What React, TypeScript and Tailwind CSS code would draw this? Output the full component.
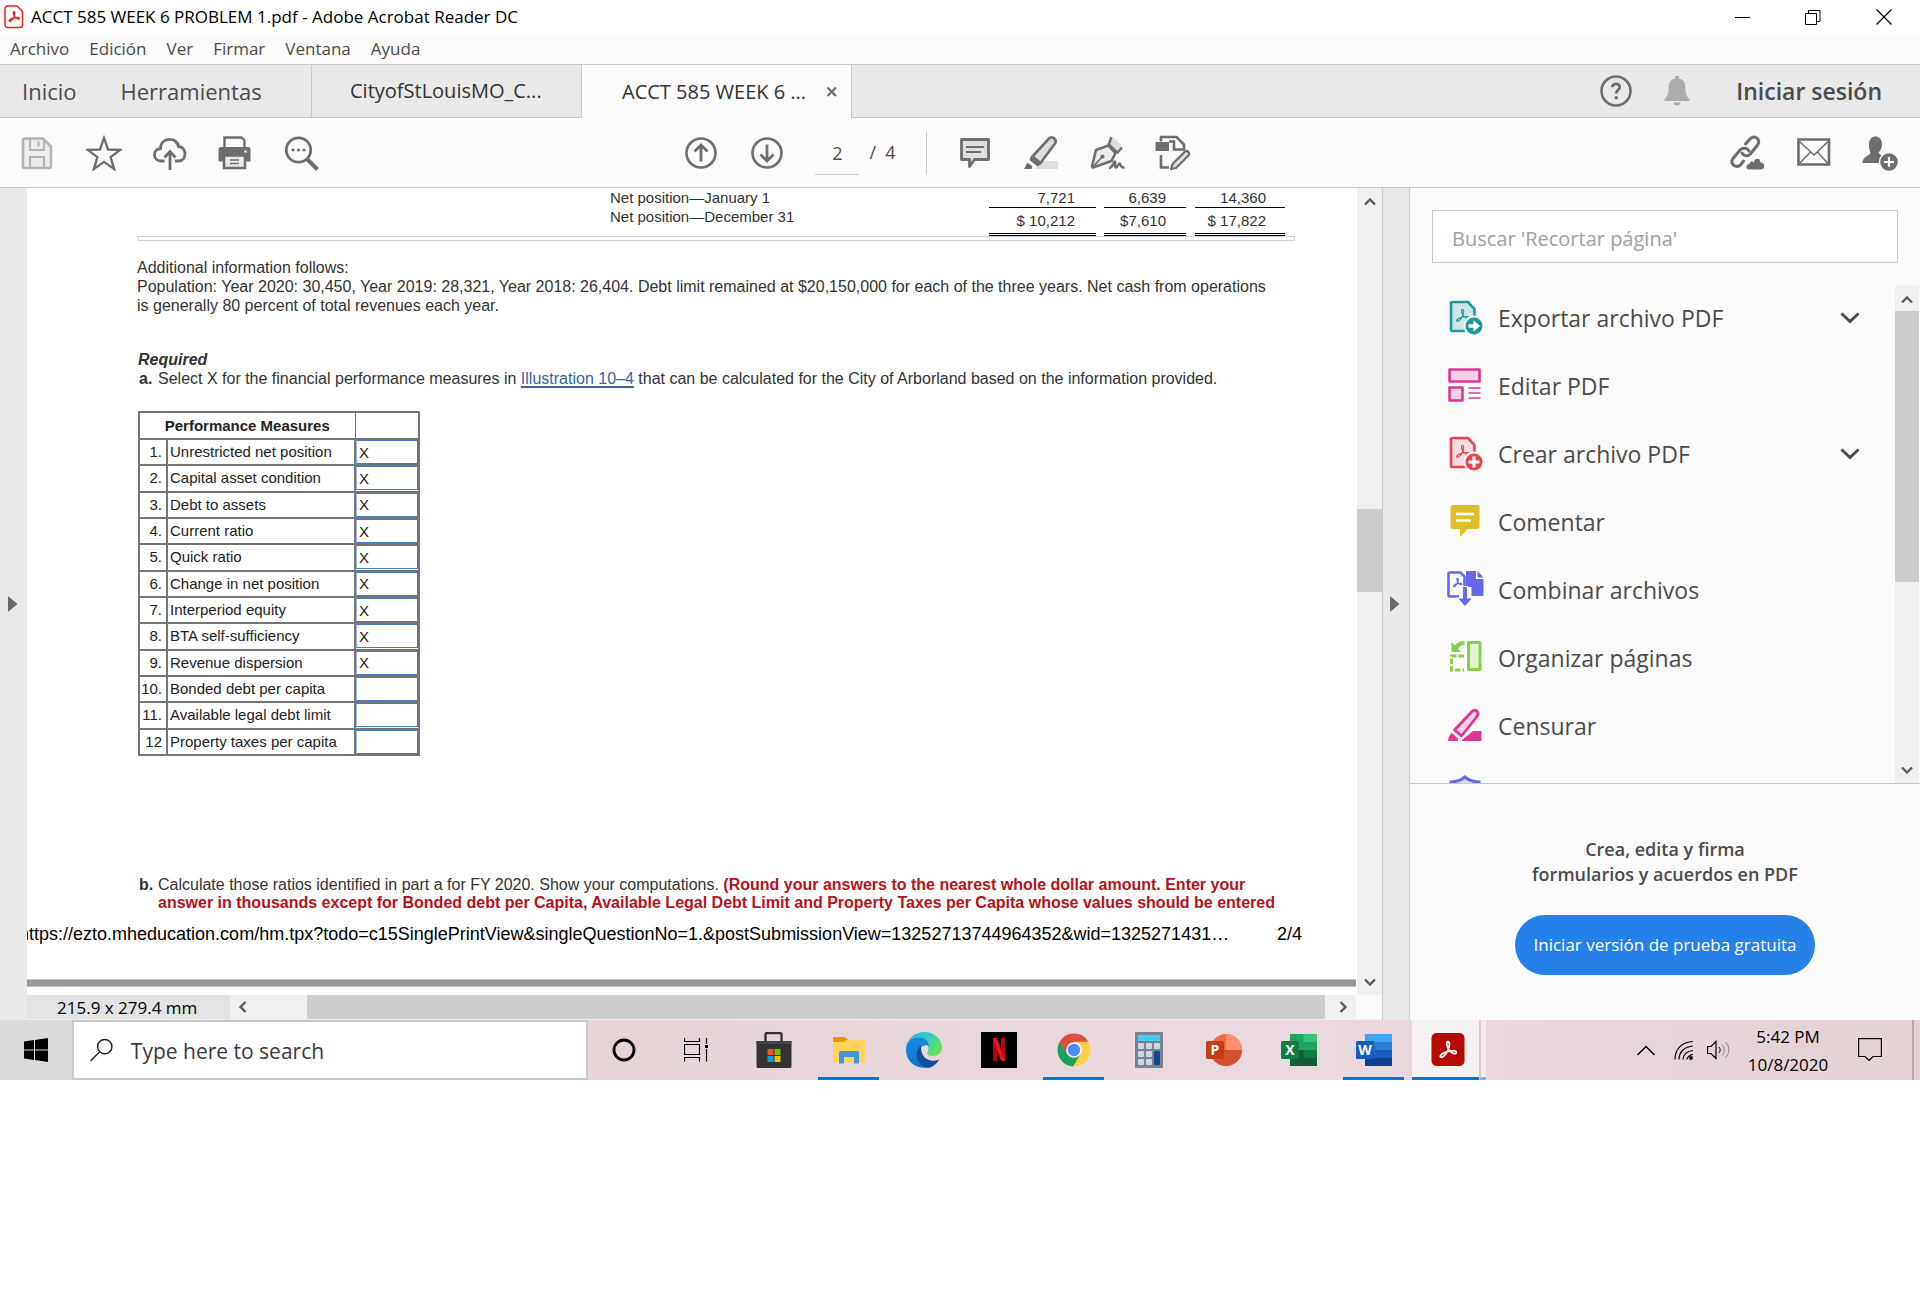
import React from "react";

type IconProps = { className?: string };

const ui = "font-['Open_Sans',sans-serif]";

function Trefoil({ x, y, size, width, color }: { x: number; y: number; size: number; width: number; color: string }) {
  return (
    <svg x={x} y={y} width={size} height={size} viewBox="0 0 24 24">
      <path
        d="M3.5 20.5c-1.6-1.8 3-5 8.500-6.200s9.500-1 9.500 1.200-3.800 1.800-7.200-1.800-5-10-2.600-10.700 2.600 5.200.3 9.700-6.300 9.800-8.500 7.800z"
        fill="none"
        stroke={color}
        strokeWidth={width}
        strokeLinejoin="round"
      />
    </svg>
  );
}

/* ---------- Title bar ---------- */

function PdfFileIcon() {
  return (
    <svg className="h-6 w-5" viewBox="0 0 20 24">
      <path d="M3.500 1h9.500l5.500 5.500v13.500a2.500 2.500 0 0 1-2.500 2.500h-12.500a2.500 2.500 0 0 1-2.500-2.500v-16.500a2.500 2.500 0 0 1 2.500-2.500z" fill="#fff" stroke="#e8251b" strokeWidth="1.500" />
      <Trefoil x={3.5} y={5} size={13} width={2.6} color="#e8251b" />
    </svg>
  );
}

function TitleBar() {
  return (
    <header className="flex h-[34px] items-center bg-white pl-1">
      <PdfFileIcon />
      <h1 className="pl-[7px] text-[17px] leading-6 text-black">ACCT 585 WEEK 6 PROBLEM 1.pdf - Adobe Acrobat Reader DC</h1>
      <div className="ml-auto flex">
        <button aria-label="Minimizar" className="flex h-[34px] w-[70px] items-center justify-center">
          <svg className="size-4" viewBox="0 0 16 16"><path d="M0 8.500h15" stroke="#000" /></svg>
        </button>
        <button aria-label="Restaurar" className="flex h-[34px] w-[70px] items-center justify-center">
          <svg className="size-4" viewBox="0 0 16 16"><path d="M.5 4.500h11v11h-11zM3.500 4.500v-3h11.500v11h-3.500" fill="none" stroke="#000" /></svg>
        </button>
        <button aria-label="Cerrar" className="flex h-[34px] w-[72px] items-center justify-center">
          <svg className="size-4" viewBox="0 0 16 16"><path d="M.5 .5l15 15M15.500 .5l-15 15" stroke="#000" strokeWidth="1.200" /></svg>
        </button>
      </div>
    </header>
  );
}

function MenuBar() {
  return (
    <nav className="flex h-[31px] items-center gap-5 border-b border-[#c8c8c8] bg-[#fbfbfb] pl-[10px] text-[17px] leading-6 text-[#4b4b4b]">
      {["Archivo", "Edición", "Ver", "Firmar", "Ventana", "Ayuda"].map((m) => (
        <button key={m}>{m}</button>
      ))}
    </nav>
  );
}

/* ---------- Tabs ---------- */

function TabStrip() {
  return (
    <div className="flex h-[53px] bg-[#e9e9e9] text-[#4b4b4b]">
      <div className="flex w-[312px] items-center gap-11 border-r border-b border-[#c8c8c8] pl-[22px] text-[22px]">
        <button>Inicio</button>
        <button>Herramientas</button>
      </div>
      <button className="w-[270px] border-r border-b border-[#c8c8c8] pl-[38px] text-left text-[20px] text-[#333]">CityofStLouisMO_C...</button>
      <div className="flex w-[270px] items-center border-r border-[#c8c8c8] bg-[#fbfbfb] pl-[40px] text-[20px] text-[#333]">
        <button className="w-[204px] text-left">ACCT 585 WEEK 6 ...</button>
        <button aria-label="Cerrar pestaña">
          <svg className="size-3" viewBox="0 0 12 12"><path d="M1.500 1.500l8.500 8.500M10 1.500l-8.500 8.500" stroke="#6e6e6e" strokeWidth="2.200" /></svg>
        </button>
      </div>
      <div className="flex flex-1 items-center justify-end gap-[31px] border-b border-[#c8c8c8] pr-[38px]">
        <button aria-label="Ayuda">
          <svg className="size-8" viewBox="0 0 32 32">
            <circle cx="16" cy="16" r="14.500" fill="none" stroke="#6e6e6e" strokeWidth="2.600" />
            <path d="M12.300 12.200c.4-4.400 7.800-4.300 7.400.2-.3 2.600-3.500 3-3.500 6.100" fill="none" stroke="#6e6e6e" strokeWidth="2.800" />
            <circle cx="16.200" cy="22.700" r="1.800" fill="#6e6e6e" />
          </svg>
        </button>
        <button aria-label="Notificaciones">
          <svg className="h-[30px] w-7" viewBox="0 0 28 30">
            <path d="M12 0h4v2.500c4.300.9 6.300 4 6.300 8.500 0 6 .8 9 4.200 12v2H1.500v-2c3.400-3 4.200-6 4.200-12 0-4.500 2-7.600 6.300-8.500zM10.500 26.500h7c-.5 4-6.500 4-7 0z" fill="#adadad" />
          </svg>
        </button>
        <button className="pl-[14px] text-[23px] font-semibold">Iniciar sesión</button>
      </div>
    </div>
  );
}

/* ---------- Toolbar ---------- */

const g = "#6e6e6e";

function SaveIcon({ className }: IconProps) {
  return (
    <svg className={className} viewBox="0 0 36 36">
      <path d="M4.500 3.500h18.500l8 8v20a1.500 1.500 0 0 1-1.500 1.500h-25a1.500 1.500 0 0 1-1.500-1.500v-26.500a1.500 1.500 0 0 1 1.500-1.500z" fill="#ececec" stroke="#b4b4b4" strokeWidth="2.600" />
      <path d="M10 4v11h14v-11M10 32v-10h14v10M18.500 6.500v5" fill="none" stroke="#b4b4b4" strokeWidth="2.200" />
    </svg>
  );
}
function StarIcon({ className }: IconProps) {
  return (
    <svg className={className} viewBox="0 0 36 36">
      <path d="M18 3l4.100 11.500 12.200.3-9.700 7.400 3.500 11.700-10.100-7-10.100 7 3.500-11.700-9.700-7.400 12.200-.3z" fill="none" stroke={g} strokeWidth="2.300" />
    </svg>
  );
}
function CloudUpIcon({ className }: IconProps) {
  return (
    <svg className={className} viewBox="0 0 36 36">
      <path d="M12.500 26h-4c-8-.5-8-12 0-12.500 0-11.500 16.500-12 18-2 8.500.5 8.500 14 .5 14.500h-4" fill="none" stroke={g} strokeWidth="2.800" />
      <path d="M18 35v-18M12.500 22.500l5.500-6 5.500 6" fill="none" stroke={g} strokeWidth="2.800" />
    </svg>
  );
}
function PrinterIcon({ className }: IconProps) {
  return (
    <svg className={className} viewBox="0 0 36 36">
      <path d="M6.500 12v-9.500h17l3 3v6.500" fill="#fbfbfb" stroke={g} strokeWidth="2.400" />
      <path d="M3 12h27a2.500 2.500 0 0 1 2.500 2.500v12h-5v-5h-22v5h-5v-12a2.500 2.500 0 0 1 2.500-2.500z" fill={g} />
      <path d="M6 20.500h21v12.500h-21z" fill="#ececec" stroke={g} strokeWidth="2.600" />
      <path d="M12 25h9M12 28.500h9" stroke={g} strokeWidth="1.500" />
      <circle cx="27.500" cy="16.500" r="1.300" fill="#fbfbfb" />
    </svg>
  );
}
function FindIcon({ className }: IconProps) {
  return (
    <svg className={className} viewBox="0 0 36 36">
      <circle cx="14.500" cy="15" r="12.200" fill="none" stroke={g} strokeWidth="2.800" />
      <path d="M23 24l10.500 10.500" stroke={g} strokeWidth="4" />
      <g fill={g}><circle cx="9" cy="15" r="1.600" /><circle cx="14.500" cy="15" r="1.600" /><circle cx="20" cy="15" r="1.600" /></g>
    </svg>
  );
}
function ArrowCircle({ className, down }: IconProps & { down?: boolean }) {
  return (
    <svg className={className} viewBox="0 0 36 36">
      <circle cx="18" cy="18" r="14.500" fill="none" stroke={g} strokeWidth="2.600" />
      {down
        ? <path d="M18 9.500v16M11.500 19.500l6.500 6.500 6.500-6.500" fill="none" stroke={g} strokeWidth="2.800" />
        : <path d="M18 26.500v-16M11.500 16.500l6.500-6.500 6.500 6.500" fill="none" stroke={g} strokeWidth="2.800" />}
    </svg>
  );
}
function NoteIcon({ className }: IconProps) {
  return (
    <svg className={className} viewBox="0 0 36 36">
      <path d="M4.500 4.500h27v20h-14l-5 7v-7h-8z" fill="#dedede" stroke={g} strokeWidth="2.800" strokeLinejoin="round" />
      <path d="M9 12h18M9 17h15" stroke={g} strokeWidth="1.800" />
    </svg>
  );
}
function HighlighterIcon({ className }: IconProps) {
  return (
    <svg className={className} viewBox="0 0 36 36">
      <path d="M11 34l9-8h15v8z" fill="#dedede" />
      <path d="M9.500 21.500l16.500-18c3-3 8.500 1 6 5l-14.500 19.500z" fill="#dedede" stroke={g} strokeWidth="2.600" strokeLinejoin="round" />
      <path d="M8 20.500l10.500 8.500-4 2.500-8-6.500zM4.500 27.500l5 4-1 2.500h-7.500z" fill={g} />
    </svg>
  );
}
function PenIcon({ className }: IconProps) {
  return (
    <svg className={className} viewBox="0 0 36 36">
      <path d="M20 9l4-7 9 9-5 6z" fill="#dedede" />
      <path d="M22.500 2l-3 8M20 9.500l8.500 8 4.500-5" fill="none" stroke={g} strokeWidth="2.400" />
      <path d="M19.500 10.500l7 7.500-4 8-18.500 6.500-1-1 4-16.500z" fill="#ececec" stroke={g} strokeWidth="2.600" strokeLinejoin="round" />
      <path d="M3.500 32.500l9-10" stroke={g} strokeWidth="1.800" />
      <circle cx="13.500" cy="21.500" r="2" fill={g} />
      <path d="M20 33c4 0 4-6.500 6-6.500 1 0-1 6 1 6s2-4 3.500-4 0 4.500 5 4" fill="none" stroke={g} strokeWidth="2.400" />
    </svg>
  );
}
function ConvertIcon({ className }: IconProps) {
  return (
    <svg className={className} viewBox="0 0 36 36">
      <path d="M6 6.500v-4.500h15.500l7.500 7.500v5h-10v-8h-5" fill="none" stroke={g} strokeWidth="2.600" />
      <path d="M.5 7h13.500v9h-13.500z" fill={g} />
      <path d="M6 20v12.500h8" fill="none" stroke={g} strokeWidth="2.600" />
      <path d="M17.500 29l12.500-12.500c2-1.500 5.500 1 3.500 4l-12.500 12.500-5 1z" fill="#dedede" stroke={g} strokeWidth="2.200" strokeLinejoin="round" />
    </svg>
  );
}
function LinkCloudIcon({ className }: IconProps) {
  return (
    <svg className={className} viewBox="0 0 36 36">
      <g fill="none" stroke={g} strokeWidth="3" strokeLinecap="round">
        <path d="M15.500 9l5-5.500c5-4 10.500 1.500 7 6.500l-7 9c-3 3-7 2-8.500-1" />
        <path d="M13.500 26l-3 4c-5 4-11-1.500-7.500-6.500l7-8.500c3.500-3 7.500-2 9 1" />
      </g>
      <path d="M18.500 35c-4-.5-3.500-6 .5-6.500.5-3 3.500-3.500 4.500-2 1-5 7.500-4 7.500.5 5 .5 5 7.500.5 8z" fill={g} stroke="#fbfbfb" strokeWidth="1.200" />
    </svg>
  );
}
function EnvelopeIcon({ className }: IconProps) {
  return (
    <svg className={className} viewBox="0 0 36 36">
      <path d="M2.500 4.500h30.500v25h-30.500z" fill="none" stroke={g} strokeWidth="2.600" />
      <path d="M3.500 6.500l14.500 13.500 14-13.500M3.500 28.500l11-11.500M32 28.500l-10.500-11.500" fill="none" stroke={g} strokeWidth="1.500" />
    </svg>
  );
}
function PersonAddIcon({ className }: IconProps) {
  return (
    <svg className={className} viewBox="0 0 36 36">
      <path d="M7 9c0-10 13-10 13 0 0 4-1.500 7-3.500 8.500 0 2.500 7 2.500 7 10.500h-23c0-7 7.500-7 8-10.500-1-1.500-1.500-4-1.500-8.500z" fill={g} />
      <circle cx="27" cy="27" r="9.500" fill={g} stroke="#fbfbfb" strokeWidth="1.500" />
      <path d="M27 22v10M22 27h10" stroke="#fff" strokeWidth="2.200" />
    </svg>
  );
}

function Toolbar() {
  const files: [string, React.ComponentType<IconProps>][] = [
    ["Guardar", SaveIcon], ["Favoritos", StarIcon], ["Subir", CloudUpIcon], ["Imprimir", PrinterIcon], ["Buscar", FindIcon],
  ];
  const edit: [string, React.ComponentType<IconProps>][] = [
    ["Agregar nota", NoteIcon], ["Resaltar", HighlighterIcon], ["Firmar", PenIcon], ["Convertir", ConvertIcon],
  ];
  const share: [string, React.ComponentType<IconProps>][] = [
    ["Compartir vínculo", LinkCloudIcon], ["Correo", EnvelopeIcon], ["Invitar", PersonAddIcon],
  ];
  return (
    <div className="flex h-[70px] items-center border-b border-[#c8c8c8] bg-[#fbfbfb] pr-[22px] pl-5 text-[18px] text-[#4b4b4b]">
      <div className="flex flex-1 gap-[30px]">
        {files.map(([n, I]) => <button key={n} aria-label={n}><I className="size-9" /></button>)}
      </div>
      <div className="mr-11 flex items-center">
        <button aria-label="Página anterior"><ArrowCircle className="size-9" /></button>
        <button aria-label="Página siguiente" className="ml-[30px]"><ArrowCircle className="size-9" down /></button>
        <input aria-label="Página" defaultValue="2" className="ml-[30px] h-11 w-11 border-b border-[#c8c8c8] bg-transparent pt-[2px] text-center outline-none" />
        <span className="pl-[10px]">/&nbsp; 4</span>
        <span className="ml-[30px] h-[42px] w-px bg-[#c8c8c8]" />
        <div className="ml-[30px] flex gap-[30px]">
          {edit.map(([n, I]) => <button key={n} aria-label={n}><I className="size-9" /></button>)}
        </div>
      </div>
      <div className="flex flex-1 justify-end gap-[30px]">
        {share.map(([n, I]) => <button key={n} aria-label={n}><I className="size-9" /></button>)}
      </div>
    </div>
  );
}

/* ---------- Document ---------- */

const measures: [string, string, string][] = [
  ["1.", "Unrestricted net position", "X"],
  ["2.", "Capital asset condition", "X"],
  ["3.", "Debt to assets", "X"],
  ["4.", "Current ratio", "X"],
  ["5.", "Quick ratio", "X"],
  ["6.", "Change in net position", "X"],
  ["7.", "Interperiod equity", "X"],
  ["8.", "BTA self-sufficiency", "X"],
  ["9.", "Revenue dispersion", "X"],
  ["10.", "Bonded debt per capita", ""],
  ["11.", "Available legal debt limit", ""],
  ["12", "Property taxes per capita", ""],
];

function NetPositionTable() {
  return (
    <table className="w-[1157px] table-fixed border-separate border-spacing-0 leading-[18px]">
      <colgroup>
        <col /><col className="w-[107px]" /><col className="w-2" /><col className="w-[82px]" /><col className="w-[9px]" /><col className="w-[90px]" /><col className="w-[10px]" />
      </colgroup>
      <tbody>
        <tr className="h-5">
          <td className="pl-[472px]">Net position—January 1</td>
          <td className="border-b border-black pr-[21px] text-right">7,721</td><td />
          <td className="border-b border-black pr-5 text-right">6,639</td><td />
          <td className="border-b border-black pr-[19px] text-right">14,360</td><td />
        </tr>
        <tr className="h-7">
          <td className="pl-[472px] align-top">Net position—December 31</td>
          <td className="border-b-3 border-double border-black pr-[21px] text-right">$ 10,212</td><td />
          <td className="border-b-3 border-double border-black pr-5 text-right">$7,610</td><td />
          <td className="border-b-3 border-double border-black pr-[19px] text-right">$ 17,822</td><td />
        </tr>
      </tbody>
    </table>
  );
}

function MeasuresTable() {
  return (
    <table className="mt-[23px] h-[345px] w-[282px] table-fixed border-collapse border-2 border-[#757575] leading-[18px] text-[#222]">
      <colgroup>
        <col className="w-[28px]" /><col className="w-[188px]" /><col />
      </colgroup>
      <thead>
        <tr className="h-[27px]">
          <th colSpan={2} className="border-2 border-r border-[#757575] p-0 font-bold">Performance Measures</th>
          <th className="border-2 border-l border-[#757575] p-0" aria-label="Selected" />
        </tr>
      </thead>
      <tbody>
        {measures.map(([n, label, x]) => (
          <tr key={n}>
            <td className="border-2 border-[#757575] p-0 pr-1 text-right">{n}</td>
            <td className="border-2 border-[#757575] p-0 pl-[2px]">{label}</td>
            <td className="border-2 border-[#757575] p-0">
              <input aria-label={label} defaultValue={x} className="block h-6 w-full border border-[#4a7abf] border-l-[#9db6dc] bg-white pl-[2px] outline-none" />
            </td>
          </tr>
        ))}
      </tbody>
    </table>
  );
}

function PdfPage() {
  return (
    <article className="flex-1 overflow-hidden bg-white font-['Liberation_Sans',Arial,sans-serif] text-[15px] whitespace-nowrap text-[#333]">
      <div className="pl-[111px]">
        <NetPositionTable />
        <div className="h-[5px] w-[1157px] border border-[#c9cfe0] bg-white" />
        <p className="mt-[17px] -ml-px text-[16px] leading-[19px]">
          Additional information follows:<br />
          Population: Year 2020: 30,450, Year 2019: 28,321, Year 2018: 26,404. Debt limit remained at $20,150,000 for each of the three years. Net cash from operations<br />
          is generally 80 percent of total revenues each year.
        </p>
        <h2 className="mt-9 text-[16px] leading-[18px] font-bold italic">Required</h2>
        <p className="flex text-[16px] leading-[19px]">
          <b className="w-5 pl-px">a.</b>
          <span>
            Select X for the financial performance measures in{" "}
            <a href="#illustration" className="text-[#3a62a0] underline decoration-2 underline-offset-2">Illustration 10–4</a>{" "}
            that can be calculated for the City of Arborland based on the information provided.
          </span>
        </p>
        <MeasuresTable />
        <p className="mt-[120px] flex text-[16px] leading-[18px]">
          <b className="w-5 pl-px">b.</b>
          <span>
            Calculate those ratios identified in part a for FY 2020. Show your computations.{" "}
            <b className="text-[#b5121b]">
              (Round your answers to the nearest whole dollar amount. Enter your<br />
              answer in thousands except for Bonded debt per Capita, Available Legal Debt Limit and Property Taxes per Capita whose values should be entered
            </b>
          </span>
        </p>
      </div>
      <div className="mt-3 -ml-2 flex text-[18px] leading-5 text-black">
        <span className="w-[1258px]">https://ezto.mheducation.com/hm.tpx?todo=c15SinglePrintView&amp;singleQuestionNo=1.&amp;postSubmissionView=13252713744964352&amp;wid=1325271431…</span>
        <span>2/4</span>
      </div>
      <div className="mt-[35px] h-2 border-y border-[#c4c4c4] bg-[#989898]" />
    </article>
  );
}

/* ---------- Scroll bars ---------- */

function Chevron({ turn, className }: { turn: number; className?: string }) {
  return (
    <svg className={className ?? "size-[14px]"} viewBox="0 0 14 14">
      <path d="M2 9.500l5-5 5 5" transform={`rotate(${turn} 7 7)`} fill="none" stroke="#5c5c5c" strokeWidth="2.400" />
    </svg>
  );
}

function Splitter({ className, direction }: { className: string; direction: string }) {
  return (
    <button aria-label={direction} className={className}>
      <svg className="h-4 w-[10px]" viewBox="0 0 10 16"><path d="M0 0l9.500 8-9.500 8z" fill="#6a6a6a" /></svg>
    </button>
  );
}

function DocumentView() {
  return (
    <main className="flex min-w-0 flex-1 flex-col">
      <div className="flex h-[807px]">
        <PdfPage />
        <div className="flex w-[26px] flex-col items-center border-l border-white bg-[#f0f0f0]">
          <span className="flex h-[28px] items-center"><Chevron turn={0} /></span>
          <div className="mt-[293px] h-[83px] w-full bg-[#cdcdcd]" />
          <span className="mt-auto flex h-[27px] items-center"><Chevron turn={180} /></span>
        </div>
      </div>
      <div className="flex h-[25px] border-b border-[#f0f0f0] bg-[#fbfbfb]">
        <div className="flex w-[203px] items-center bg-[#e3e3e3] pt-[2px] pl-[30px] text-[17px] leading-6 text-black">215.9 x 279.4 mm</div>
        <div className="flex flex-1 items-center bg-[#f0f0f0]">
          <span className="flex w-[77px] pl-[6px]"><Chevron turn={-90} /></span>
          <div className="h-full flex-1 bg-[#cdcdcd]" />
          <span className="flex w-[31px] justify-center pl-1"><Chevron turn={90} /></span>
        </div>
        <div className="w-[26px]" />
      </div>
    </main>
  );
}

/* ---------- Tools panel ---------- */

function PdfToolIcon({ color, tint, plus }: { color: string; tint: string; plus?: boolean }) {
  return (
    <svg className="size-10" viewBox="0 0 40 40">
      <path d="M6 4h16l6.500 7v22h-22.500a1 1 0 0 1-1-1v-27a1 1 0 0 1 1-1z" fill={tint} stroke={color} strokeWidth="2.600" />
      <Trefoil x={8.500} y={9.500} size={16} width={1.800} color={color} />
      <circle cx="28" cy="28" r="9.500" fill={color} stroke="#fbfbfb" strokeWidth="2" />
      {plus
        ? <path d="M28 22.500v11M22.500 28h11" stroke="#fff" strokeWidth="3.200" />
        : <path d="M22.500 26.300h5v-4l6.500 5.700-6.500 5.700v-4h-5z" fill="#fff" />}
    </svg>
  );
}
function EditIcon() {
  return (
    <svg className="size-10" viewBox="0 0 40 40">
      <path d="M3.500 3.500h30v12h-30zM3.500 21.500h13v13h-13z" fill="#f6d0e5" stroke="#db3795" strokeWidth="2.600" strokeLinejoin="round" />
      <path d="M22.500 22h12M22.500 27h12M22.500 32h12" stroke="#db3795" strokeWidth="1.500" />
    </svg>
  );
}
function CommentIcon() {
  return (
    <svg className="size-10" viewBox="0 0 40 40">
      <path d="M6.500 3h25a2 2 0 0 1 2 2v20a2 2 0 0 1-2 2h-10l-7.500 8v-8h-7.500a2 2 0 0 1-2-2v-20a2 2 0 0 1 2-2z" fill="#dfbf2c" />
      <path d="M10 12h18M10 18.500h15" stroke="#fff" strokeWidth="2.400" />
    </svg>
  );
}
function CombineIcon() {
  return (
    <svg className="size-10" viewBox="0 0 40 40">
      <path d="M13 26.500h-9.500a1 1 0 0 1-1-1v-22a1 1 0 0 1 1-1h11l4 4v14" fill="#fff" stroke="#6767ec" strokeWidth="2.600" />
      <Trefoil x={6} y={7} size={11} width={2.600} color="#6767ec" />
      <path d="M20 1h10v8h7.500v17h-12v-9h-5.500zM31.500 1l6 6.500h-6z" fill="#6767ec" />
      <path d="M16.500 16.500h5v11.500h5.500l-8 9-8-9h5.500z" fill="#6767ec" stroke="#fbfbfb" strokeWidth="1.200" />
    </svg>
  );
}
function OrganizeIcon() {
  return (
    <svg className="size-10" viewBox="0 0 40 40">
      <path d="M22.500 4.500h11.500v27h-11.500z" fill="#e3f2d3" stroke="#84d149" strokeWidth="3" strokeLinejoin="round" />
      <path d="M5.500 4v10h10l-3.500-3c1.500-3 3.500-4 6.500-4v-4c-4.500 0-7.500 1.500-9.500 4.500z" fill="#84d149" />
      <path d="M18 18h-12.500v14h12.500" fill="none" stroke="#84d149" strokeWidth="3" strokeDasharray="5.500 2" />
    </svg>
  );
}
function RedactIcon() {
  return (
    <svg className="size-10" viewBox="0 0 40 40">
      <path d="M16 34.500l11-9h8v9z" fill="#db3795" stroke="#db3795" strokeLinejoin="round" />
      <path d="M8.500 24l17.500-18.500c3.500-3 8 1 5 5l-15.500 19.500z" fill="#f6d0e5" stroke="#db3795" strokeWidth="2.800" strokeLinejoin="round" />
      <path d="M6 27l6 5.500v2.500h-10c0-4 2-7 4-8z" fill="#db3795" />
    </svg>
  );
}
function ShieldIcon() {
  return (
    <svg className="size-10" viewBox="0 0 40 40">
      <path d="M19 2c4 3.500 8.500 5 14 5v13c0 8-6 13-14 17-8-4-14-9-14-17v-13c5.500 0 10-1.500 14-5z" fill="#dcdcfa" stroke="#6767ec" strokeWidth="3" />
    </svg>
  );
}

const tools: { label: string; icon: React.ReactNode; more?: boolean }[] = [
  { label: "Exportar archivo PDF", icon: <PdfToolIcon color="#1e979b" tint="#cde7e8" />, more: true },
  { label: "Editar PDF", icon: <EditIcon /> },
  { label: "Crear archivo PDF", icon: <PdfToolIcon color="#e5444d" tint="#f8dddf" plus />, more: true },
  { label: "Comentar", icon: <CommentIcon /> },
  { label: "Combinar archivos", icon: <CombineIcon /> },
  { label: "Organizar páginas", icon: <OrganizeIcon /> },
  { label: "Censurar", icon: <RedactIcon /> },
];

function ToolsPanel() {
  return (
    <aside className="flex w-[511px] flex-col border-l border-[#c8c8c8] bg-[#fbfbfb] text-[#4b4b4b]">
      <div className="px-[22px] pt-[22px]">
        <input
          aria-label="Buscar"
          placeholder="Buscar 'Recortar página'"
          className="h-[53px] w-full border border-[#c8c8c8] bg-white px-[19px] pt-1 text-[20px] outline-none placeholder:text-[#a0a0a0]"
        />
      </div>
      <div className="mt-[22px] flex h-[499px] overflow-hidden border-b border-[#c8c8c8]">
        <ul className="flex-1 pt-[2px]">
          {tools.map((t) => (
            <li key={t.label} className="h-[68px]">
              <button className="flex h-[62px] w-full items-center pr-[35px] pl-9 text-left text-[23px]">
                {t.icon}
                <span className="flex-1 pl-3">{t.label}</span>
                {t.more && (
                  <svg className="h-3 w-5" viewBox="0 0 20 12"><path d="M1.500 1.500l8.500 8 8.500-8" fill="none" stroke="#4b4b4b" strokeWidth="3" /></svg>
                )}
              </button>
            </li>
          ))}
          <li className="h-[68px] pt-3 pl-9"><ShieldIcon /></li>
        </ul>
        <div className="flex w-[25px] flex-col items-center border-r border-[#fbfbfb] bg-[#f0f0f0]">
          <span className="flex h-[26px] items-center pt-1"><Chevron turn={0} /></span>
          <div className="h-[271px] w-full bg-[#cdcdcd]" />
          <span className="mt-auto flex h-[27px] items-center"><Chevron turn={180} /></span>
        </div>
      </div>
      <div className="flex flex-col items-center pr-2 pl-2">
        <p className="mt-[53px] text-center text-[18px] leading-[25px] font-semibold">
          Crea, edita y firma<br />formularios y acuerdos en PDF
        </p>
        <button className="mt-7 h-[60px] rounded-full bg-[#2680e8] px-[18px] text-[17px] text-white">Iniciar versión de prueba gratuita</button>
      </div>
    </aside>
  );
}

/* ---------- Taskbar ---------- */

function StoreIcon() {
  return (
    <svg className="size-9" viewBox="0 0 36 36">
      <path d="M9.500 11v-8.500a1.500 1.500 0 0 1 1.500-1.500h13a1.500 1.500 0 0 1 1.500 1.500v8.500" fill="none" stroke="#333" strokeWidth="2.400" />
      <path d="M.5 9h35v25.500a1.500 1.500 0 0 1-1.500 1.500h-32a1.500 1.500 0 0 1-1.500-1.500z" fill="#333" />
      <path d="M.5 9h35v3h-35z" fill="#444" />
      <path d="M11.500 17h6v6h-6z" fill="#f25022" /><path d="M18.500 17h6v6h-6z" fill="#7fba00" />
      <path d="M11.500 24h6v6h-6z" fill="#00a4ef" /><path d="M18.500 24h6v6h-6z" fill="#ffb900" />
    </svg>
  );
}
function FolderIcon() {
  return (
    <svg className="size-9" viewBox="0 0 36 36">
      <path d="M2 10v-4a1 1 0 0 1 1-1h10.500l3.500 2.500-3 2.500z" fill="#e09c00" />
      <path d="M2 10h11l4-2.500h16a1 1 0 0 1 1 1v21a1 1 0 0 1-1 1h-30a1 1 0 0 1-1-1z" fill="#ffd45e" />
      <path d="M8 31.500v-11a1.500 1.500 0 0 1 1.500-1.500h17a1.500 1.500 0 0 1 1.500 1.500v11h-5v-6.500h-10v6.500z" fill="#3f98df" />
    </svg>
  );
}
function EdgeIcon() {
  return (
    <svg className="size-9" viewBox="0 0 36 36">
      <defs>
        <linearGradient id="edgeTop" x1="0" y1="0" x2="1" y2="0.500"><stop offset="0" stopColor="#2fb4ef" /><stop offset="0.500" stopColor="#34c6cf" /><stop offset="1" stopColor="#62e35a" /></linearGradient>
        <linearGradient id="edgeLow" x1="0" y1="0" x2="0.300" y2="1"><stop offset="0" stopColor="#1a8fe0" /><stop offset="1" stopColor="#0a72d0" /></linearGradient>
      </defs>
      <path d="M0 16c1-9.500 9-16 18.500-16 10 0 17.500 7.500 17.500 15.500 0 5.500-4.500 8.500-9 8.500-4 0-6.500-1.500-6-3 3-3.500 1.500-10-6-11-7-.5-12 2.500-15 6z" fill="url(#edgeTop)" />
      <path d="M0 18c0-8 6.500-12.500 13-12.500 5.500 0 9 3 10 8.500-2.500-1.500-6-1-8 1.500-3.500 5 0 13.500 8 15.500l-.5 4.500c-12.500 2-22.500-6-22.500-17.500z" fill="url(#edgeLow)" />
      <path d="M15 13.500c-5 4-5.500 10-3 15s8 8 12 7c4-1.200 7.500-4.500 9.300-8-9.300 3.500-18.800-.5-18.300-14z" fill="#10509a" />
    </svg>
  );
}
function NetflixIcon() {
  return (
    <svg className="size-9" viewBox="0 0 36 36">
      <path d="M0 0h36v36h-36z" fill="#000" />
      <path d="M12 6h4v23.500l-4-.4zM20 6h4v23.100l-4-.2z" fill="#b1060f" />
      <path d="M12 6h4l8 23.200-4-.4z" fill="#f1121c" />
    </svg>
  );
}
function ChromeIcon() {
  return (
    <svg className="size-9" viewBox="0 0 36 36">
      <circle cx="18" cy="18" r="16.500" fill="#ffcf44" />
      <path d="M3.700 9.800a16.500 16.500 0 0 1 28.600 0h-14.300l-7.200 12.400z" fill="#dd4f43" />
      <path d="M3.700 9.800a16.500 16.500 0 0 0 13.300 24.700l7.500-12.300-13.500 0z" fill="#1aa160" />
      <circle cx="18" cy="18" r="7.800" fill="#fff" /><circle cx="18" cy="18" r="6.200" fill="#4c8bf5" />
    </svg>
  );
}
function CalcIcon() {
  const keys = [[7, 11], [15, 11], [23, 11], [7, 19], [15, 19], [7, 27], [15, 27]];
  return (
    <svg className="size-9" viewBox="0 0 36 36">
      <path d="M5 0h26a1 1 0 0 1 1 1v34a1 1 0 0 1-1 1h-26a1 1 0 0 1-1-1v-34a1 1 0 0 1 1-1z" fill="#76828c" />
      <path d="M7 3h22v6h-22z" fill="#43cdf5" />
      {keys.map(([x, y]) => <rect key={`${x}-${y}`} x={x} y={y} width="6" height="6" rx="1" fill="#cfd6e3" />)}
      <rect x="23" y="19" width="6" height="14" rx="1" fill="#114a8b" />
    </svg>
  );
}
function OfficeIcon({ letter, kind }: { letter: string; kind: "p" | "x" | "w" }) {
  const c = { p: ["#ff8f6b", "#d35230", "#c43e1c"], x: ["#33c481", "#185c37", "#107c41"], w: ["#41a5ee", "#103f91", "#185abd"] }[kind];
  return (
    <svg className="size-9" viewBox="0 0 36 36">
      {kind === "p" && (
        <>
          <circle cx="20" cy="18" r="16" fill="#ed6c47" />
          <path d="M20 2a16 16 0 0 1 16 16h-16z" fill={c[0]} />
          <path d="M4 18h32a16 16 0 0 1-32 0z" fill={c[1]} />
        </>
      )}
      {kind === "x" && (
        <>
          <path d="M9 2h27v32h-27z" fill="#21a366" /><path d="M22.500 2h13.500v8h-13.500z" fill={c[0]} />
          <path d="M9 18h27v8h-27z" fill="#107c41" /><path d="M9 18h13.500v16h-13.500zM9 26h27v8h-27z" fill={c[1]} />
        </>
      )}
      {kind === "w" && (
        <>
          <path d="M9 2h27v8h-27z" fill={c[0]} /><path d="M9 10h27v8h-27z" fill="#2b7cd3" />
          <path d="M9 18h27v8h-27z" fill="#185abd" /><path d="M9 26h27v8h-27z" fill={c[1]} />
        </>
      )}
      <rect x="0" y="9" width="18" height="18" rx="1.500" fill={c[2]} />
      <text x="9" y="23" textAnchor="middle" fontSize="14" fontWeight="700" fill="#fff" fontFamily="Open Sans, sans-serif">{letter}</text>
    </svg>
  );
}
function AcrobatIcon() {
  return (
    <svg className="size-9" viewBox="0 0 36 36">
      <rect x="1.500" y="1" width="33" height="33" rx="5" fill="#b30b00" />
      <Trefoil x={7.500} y={7} size={21} width={2} color="#fff" />
    </svg>
  );
}

const apps: { name: string; icon: React.ReactNode; open?: boolean }[] = [
  { name: "Microsoft Store", icon: <StoreIcon /> },
  { name: "File Explorer", icon: <FolderIcon />, open: true },
  { name: "Edge", icon: <EdgeIcon /> },
  { name: "Netflix", icon: <NetflixIcon /> },
  { name: "Chrome", icon: <ChromeIcon />, open: true },
  { name: "Calculator", icon: <CalcIcon /> },
  { name: "PowerPoint", icon: <OfficeIcon letter="P" kind="p" /> },
  { name: "Excel", icon: <OfficeIcon letter="X" kind="x" /> },
  { name: "Word", icon: <OfficeIcon letter="W" kind="w" />, open: true },
];

function Taskbar() {
  return (
    <footer className="flex h-[60px] bg-[#dadadd]">
      <button aria-label="Start" className="flex w-[72px] items-center justify-center">
        <svg className="size-6" viewBox="0 0 24 24"><path d="M0 3.500l10-1.400v9.400h-10zM11 2l13-2v11.500h-13zM0 12.500h10v9.400l-10-1.400zM11 12.500h13v11.500l-13-2z" fill="#000" /></svg>
      </button>
      <div className="flex w-[516px] flex-none items-center border-2 border-[#c9c9c9] bg-white pl-4">
        <svg className="size-6" viewBox="0 0 24 24"><circle cx="15.500" cy="8.500" r="7.500" fill="none" stroke="#222" strokeWidth="1.500" /><path d="M10 14l-9.500 9.500" stroke="#222" strokeWidth="1.500" /></svg>
        <input aria-label="Search" placeholder="Type here to search" className="w-full pt-[3px] pl-[18px] text-[21px] outline-none placeholder:text-[#3a3a3a]" />
      </div>
      <div className="flex flex-1 bg-linear-to-r from-[#e4d4d6] via-[#ead9df] to-[#e3d3d5]">
        <button aria-label="Cortana" className="flex w-[72px] items-center justify-center">
          <svg className="size-6" viewBox="0 0 24 24"><circle cx="12" cy="12" r="10" fill="none" stroke="#000" strokeWidth="2.800" /></svg>
        </button>
        <button aria-label="Task View" className="mr-1 flex w-[72px] items-center justify-center">
          <svg className="size-6" viewBox="0 0 24 24"><path d="M.5 0v3.500h15v-3.500M.5 6.500h15v10h-15zM.5 23.500v-4h15v4M22.500 0v6M22.500 11v12.500" fill="none" stroke="#000" strokeWidth="1.200" /><path d="M21 7h3v3h-3z" fill="#000" /></svg>
        </button>
        {apps.map((a) => (
          <button key={a.name} aria-label={a.name} className="flex w-[75px] flex-col items-center pt-3">
            {a.icon}
            {a.open && <span className="mt-auto h-[3px] w-[61px] bg-[#0078d7]" />}
          </button>
        ))}
        <button aria-label="Acrobat Reader" className="ml-px flex w-[74px]">
          <span className="flex h-full w-[67px] flex-col items-center border-b-3 border-[#0078d7] bg-[#f8f1f1] pt-3 pl-1"><AcrobatIcon /></span>
          <span className="h-full w-[7px] border-b-3 border-l-2 border-b-[#7ab3e6] border-l-[#d9cbcc] bg-[#f5ebec]" />
        </button>
        <div className="ml-auto flex items-center text-black">
          <button aria-label="Hidden icons">
            <svg className="h-[11px] w-[18px]" viewBox="0 0 18 11"><path d="M.5 10l8.500-8.500 8.500 8.500" fill="none" stroke="#000" strokeWidth="1.400" /></svg>
          </button>
          <svg className="ml-[19px] h-5 w-[19px]" viewBox="0 0 19 20">
            <path d="M1 19.500c0-11 7-17.500 18-18M5 19.500c0-8 6-13 14-13.500M9 19.500c.5-5 4-8.500 10-9M13 19.500c.5-2.500 2-4.500 6-5" fill="none" stroke="#000" strokeWidth="1.200" />
            <circle cx="17" cy="18" r="1.900" fill="#000" />
          </svg>
          <svg className="ml-[14px] h-5 w-[23px]" viewBox="0 0 23 20">
            <path d="M.6 6.500h3.400l5-5v17l-5-5h-3.400z" fill="none" stroke="#000" strokeWidth="1.200" />
            <path d="M12 7c1.500 2 1.500 4 0 6" fill="none" stroke="#000" /><path d="M15 4.500c3 3.500 3 7.500 0 11M18.500 2c4.500 5 4.500 11 0 16" fill="none" stroke="#8d8385" />
          </svg>
          <div className="ml-4 flex w-[84px] flex-col pt-[2px] text-center text-[17px] leading-7">
            <span>5:42 PM</span><span>10/8/2020</span>
          </div>
          <button aria-label="Action Center" className="ml-7">
            <svg className="h-6 w-6" viewBox="0 0 24 24"><path d="M.6 .6h22.800v17.900h-8.400l-4 4-4-4h-6.400z" fill="none" stroke="#000" strokeWidth="1.200" /></svg>
          </button>
          <span className="mr-[6px] ml-[30px] h-[60px] w-[2px] bg-[#b5a9ab]" />
        </div>
      </div>
    </footer>
  );
}

export default function App() {
  return (
    <div className={`min-h-screen bg-white ${ui}`}>
      <TitleBar />
      <MenuBar />
      <TabStrip />
      <Toolbar />
      <div className="flex h-[832px]">
        <Splitter direction="Mostrar navegación" className="flex w-[27px] items-center justify-center bg-[#e9e9e9] pr-[2px]" />
        <DocumentView />
        <Splitter direction="Ocultar herramientas" className="flex w-[27px] items-center justify-center border-l border-[#c8c8c8] bg-[#e9e9e9] pr-[2px]" />
        <ToolsPanel />
      </div>
      <Taskbar />
    </div>
  );
}
